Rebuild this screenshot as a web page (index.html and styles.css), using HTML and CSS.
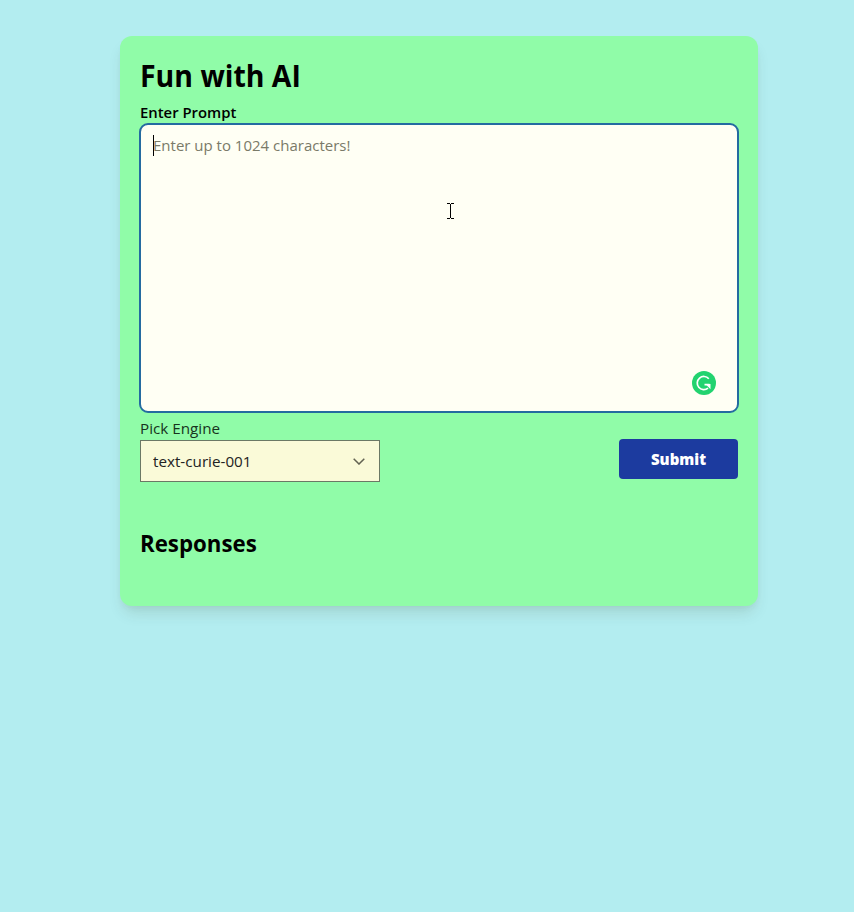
FILE: index.html
```html
<!DOCTYPE html>
<html lang="en">
<head>
<meta charset="utf-8">
<title>Fun with AI</title>
<link rel="stylesheet" href="styles.css">
</head>
<body>
<main class="card">
  <h1 class="title"><span>Fun with AI</span></h1>
  <label class="label label-prompt" for="prompt"><span>Enter Prompt</span></label>
  <div class="prompt-wrap">
    <textarea id="prompt" class="prompt" placeholder="Enter up to 1024 characters!"></textarea>
    <span class="caret"></span>
    <svg class="pointer" viewBox="0 0 7 16" shape-rendering="crispEdges"><path d="M0 .5h3m1 0h3M3.500 1v14M0 15.500h3m1 0h3" fill="none" stroke="#000"/></svg>
    <svg class="badge" viewBox="0 0 24 24"><circle cx="12" cy="12" r="12" fill="#22d36f"/><path d="M16.800 7.700A6.600 6.600 0 1 0 16 17.200M12.500 13.700h5" fill="none" stroke="#fff" stroke-width="1.700"/><path d="M13.500 13h5v5.200z" fill="#fff"/></svg>
  </div>
  <div class="label label-engine"><span>Pick Engine</span></div>
  <div class="controls">
    <div class="select"><span>text-curie-001</span><svg class="chevron" viewBox="0 0 12 7"><path d="M.7.7 6 6 11.300.7" fill="none" stroke="#626252" stroke-width="1.500"/></svg></div>
    <button class="submit" type="button"><span>Submit</span></button>
  </div>
  <h2 class="responses"><span>Responses</span></h2>
</main>
</body>
</html>
```
FILE: styles.css
```css
* { box-sizing: border-box; }
body { margin: 0; min-height: 912px; padding-top: 36px; background: #b3edf0; color: #000; font: 16px/24px "Open Sans", "Noto Sans", sans-serif; }
.card { width: 638px; height: 570px; margin-left: 120px; padding: 20px 20px 0; border-radius: 12px; background: #90fca8; box-shadow: 0 10px 15px -3px rgba(60,60,0,.12), 0 4px 6px -2px rgba(60,60,0,.06); }
h1, h2 { margin: 0; }
h1 span, h2 span, .label span, .select span, .submit span { display: inline-block; transform-origin: left center; white-space: nowrap; }
.title { height: 45px; font-size: 30px; line-height: 40px; font-weight: 700; }
.title span { transform: scaleX(.948); }
.label { display: block; height: 22px; font-size: 15px; line-height: 22px; }
.label-prompt { font-weight: 600; }
.label-prompt span { transform: scaleX(.99); }
.prompt-wrap { position: relative; width: 600px; height: 290px; margin: 0 -1px; }
.prompt { display: block; width: 100%; height: 100%; margin: 0; padding: 9px 12px; border: 2px solid #246ba0; border-radius: 9px; outline: 0; resize: none; background: #fffff4; font: 15px/22px "Open Sans", sans-serif; }
.prompt::placeholder { color: #7a7a68; opacity: 1; }
.caret { position: absolute; left: 14px; top: 12px; width: 1px; height: 21px; background: #000; }
.pointer { position: absolute; left: 308px; top: 80px; width: 7px; height: 16px; }
.badge { position: absolute; left: 553px; top: 248px; width: 24px; height: 24px; }
.label-engine { height: 23px; margin-top: 4px; color: #17331d; }
.label-engine span { transform: scaleX(1.015); }
.controls { display: flex; justify-content: space-between; align-items: flex-start; }
.select { display: flex; justify-content: space-between; align-items: center; width: 240px; height: 42px; padding: 0 14px 0 12px; border: 1px solid #6b7865; background: #fafad8; color: #222; font-size: 15px; }
.select span { transform: scaleX(1.015); }
.chevron { width: 12px; height: 7px; }
.submit { width: 119px; height: 40px; margin-top: -1px; padding: 0; border: 0; border-radius: 4px; background: #1c3b9f; color: #fff; font: 800 15px/24px "Open Sans", sans-serif; }
.responses { margin-top: 45px; font-size: 23px; line-height: 32px; font-weight: 700; }
.responses span { transform: scaleX(.968); }
```
